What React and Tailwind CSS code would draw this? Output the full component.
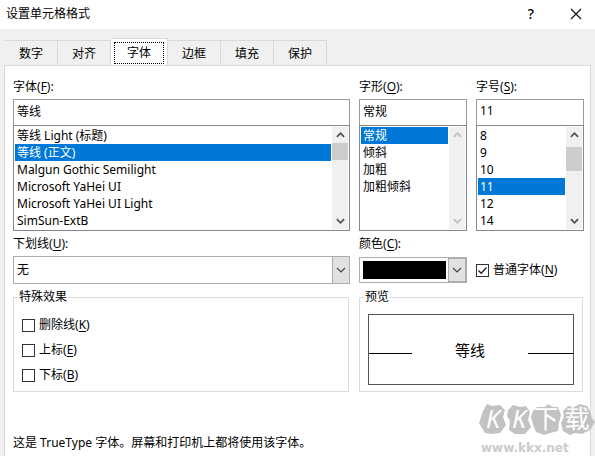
import React, { useState } from 'react';
import clsx from 'clsx';

const TABS = ['数字', '对齐', '字体', '边框', '填充', '保护'];

const FONTS = [
  '等线 Light (标题)',
  '等线 (正文)',
  'Malgun Gothic Semilight',
  'Microsoft YaHei UI',
  'Microsoft YaHei UI Light',
  'SimSun-ExtB',
];

const STYLES = ['常规', '倾斜', '加粗', '加粗倾斜'];

const SIZES = ['8', '9', '10', '11', '12', '14'];

const EFFECTS = [
  { id: 'strike', text: '删除线', hotkey: 'K' },
  { id: 'super', text: '上标', hotkey: 'E' },
  { id: 'sub', text: '下标', hotkey: 'B' },
];

const Hotkey = ({ text, hotkey, colon }) => (
  <>
    {text}(<span className="underline underline-offset-2">{hotkey}</span>){colon && ':'}
  </>
);

const Chevron = ({ className, up, thick }) => (
  <svg viewBox="0 0 10 6" className={className} fill="none" stroke="currentColor" strokeWidth={thick ? 2 : 1.2}>
    <path d={up ? 'M1 5 L5 1 L9 5' : 'M1 1 L5 5 L9 1'} />
  </svg>
);

const ScrollBar = ({ disabled, thumb }) => (
  <div className={clsx('flex w-4 shrink-0 flex-col bg-[#f0f0f0]', disabled ? 'text-[#bfbfbf]' : 'text-[#505050]')}>
    <button type="button" aria-label="向上滚动" disabled={disabled} className="flex h-4 items-center justify-center">
      <Chevron up thick className="h-[6px] w-[9px] overflow-visible" />
    </button>
    <div className="flex-1">{thumb && <div className={clsx('bg-[#cdcdcd]', thumb)} />}</div>
    <button type="button" aria-label="向下滚动" disabled={disabled} className="flex h-4 items-center justify-center">
      <Chevron thick className="h-[6px] w-[9px] overflow-visible" />
    </button>
  </div>
);

const FontField = ({ id, text, hotkey, options, value, onChange, disabled, thumb }) => (
  <div className="min-w-0">
    <label htmlFor={id} className="block h-5 leading-4">
      <Hotkey text={text} hotkey={hotkey} colon />
    </label>
    <input
      id={id}
      value={value.replace(/ \(.*\)/, '')}
      onChange={(e) => onChange(e.target.value)}
      className="block h-[26px] w-full border border-b-0 border-[#9a9a9a] bg-white px-[3px] pb-1 outline-none"
    />
    <div className="flex h-[106px] border border-[#828790] bg-white p-px">
      <ul role="listbox" aria-label={text} className="min-w-0 flex-1">
        {options.map((option) => (
          <li
            key={option}
            role="option"
            aria-selected={option === value}
            onClick={() => onChange(option)}
            className={clsx(
              'mr-px h-[17px] cursor-default truncate px-0.5 leading-[17px]',
              option === value && 'bg-[#0078d7] text-white'
            )}
          >
            {option}
          </li>
        ))}
      </ul>
      <ScrollBar disabled={disabled} thumb={thumb} />
    </div>
  </div>
);

const CheckBox = ({ id, text, hotkey, defaultChecked }) => (
  <div className="flex items-center gap-1">
    <span className="relative flex">
      <input
        id={id}
        type="checkbox"
        defaultChecked={defaultChecked}
        className="peer size-[13px] appearance-none border border-[#333] bg-white"
      />
      <svg
        viewBox="0 0 13 13"
        className="pointer-events-none absolute inset-0 hidden size-[13px] peer-checked:block"
        fill="none"
        stroke="#222"
        strokeWidth="1.3"
      >
        <path d="M2.5 6.5 L5.2 9.3 L10.5 3.5" />
      </svg>
    </span>
    <label htmlFor={id} className="leading-4">
      <Hotkey text={text} hotkey={hotkey} />
    </label>
  </div>
);

const DropArrow = () => (
  <span className="pointer-events-none absolute inset-y-0 right-0 flex w-[18px] items-center justify-center border border-[#adadad] bg-[#e1e1e1] text-[#444]">
    <Chevron className="h-[6px] w-[10px]" />
  </span>
);

const Watermark = () => (
  <div className="pointer-events-none absolute right-0 bottom-0 w-[116px]">
    <svg viewBox="0 -3 116 46" className="block w-full overflow-visible">
      <g fill="#c2c2c2">
        <path d="M4 8 L8 1 L13 3 L21 2 L26 7 L24 14 L27 22 L21 30 L13 31 L6 30 L0 20 Z" />
        <path d="M29 7 L34 2 L41 4 L47 3 L51 9 L49 17 L52 24 L46 31 L36 31 L30 27 L31 18 L28 13 Z" />
        <path d="M54 8 L58 4 L66 4 L69 1 L74 4 L79 4 L82 12 L80 20 L79 28 L71 30 L65 32 L57 29 L54 21 L52 14 Z" />
        <path d="M84 8 L89 3 L95 4 L101 1 L108 3 L111 8 L113 15 L116 19 L111 27 L103 31 L96 30 L91 32 L84 28 L82 20 L85 14 Z" />
      </g>
      <g
        fill="#fff"
        className="font-['Noto_Sans','Noto_Sans_CJK_SC',sans-serif]"
        fontSize="25"
        textAnchor="middle"
      >
        <text x="14" y="25" fontStyle="italic">K</text>
        <text x="40" y="25" fontStyle="italic">K</text>
        <text x="67" y="25">下</text>
        <text x="98" y="25">载</text>
      </g>
    </svg>
    <p className="-mt-1.5 pl-0.5 font-['DejaVu_Sans',sans-serif] text-xs leading-4 font-bold text-[#cbcbcb]">
      www.kkx.net
    </p>
  </div>
);

const App = () => {
  const [tab, setTab] = useState('字体');
  const [font, setFont] = useState('等线 (正文)');
  const [style, setStyle] = useState('常规');
  const [size, setSize] = useState('11');

  return (
    <div className="relative flex min-h-screen flex-col bg-[#f0f0f0] font-['Noto_Sans','Noto_Sans_CJK_SC',sans-serif] text-xs text-black">
      {/* Title bar */}
      <header className="flex h-[29px] items-center justify-between bg-white pr-3 pb-0.5 pl-1.5">
        <h1>设置单元格格式</h1>
        <div className="flex items-center gap-8">
          <button type="button" aria-label="帮助" className="w-3 text-sm leading-4 font-medium">
            ?
          </button>
          <button type="button" aria-label="关闭" className="p-px">
            <svg viewBox="0 0 12 12" className="size-3" stroke="#111" strokeWidth="1.2">
              <path d="M1 1 L11 11 M11 1 L1 11" />
            </svg>
          </button>
        </div>
      </header>

      {/* Tabs */}
      <div role="tablist" className="flex h-9 items-end pl-[5px]">
        {TABS.map((name) => (
          <button
            key={name}
            type="button"
            role="tab"
            aria-selected={name === tab}
            onClick={() => setTab(name)}
            className={clsx(
              'border-t border-r border-[#d9d9d9]',
              name === tab
                ? '-mb-px h-7 w-[57px] bg-white px-[3px] pt-[3px] pb-0.5'
                : 'h-[25px] w-[53px] pt-0.5'
            )}
          >
            <span
              className={clsx(
                'flex h-full items-center justify-center',
                name === tab && 'border border-dotted border-black'
              )}
            >
              {name}
            </span>
          </button>
        ))}
      </div>

      {/* Font page */}
      <main className="mx-1 flex-1 border border-b-0 border-[#d9d9d9] bg-white pt-[13px] pr-1.5 pl-2">
        <div className="grid grid-cols-[minmax(0,1fr)_108px_108px] gap-x-[9px]">
          <FontField id="font" text="字体" hotkey="F" options={FONTS} value={font} onChange={setFont} thumb="h-[17px]" />
          <FontField id="style" text="字形" hotkey="O" options={STYLES} value={style} onChange={setStyle} disabled />
          <FontField id="size" text="字号" hotkey="S" options={SIZES} value={size} onChange={setSize} thumb="mt-1 h-6" />

          <div className="pt-[5px]">
            <label htmlFor="underline" className="block h-5 leading-4">
              <Hotkey text="下划线" hotkey="U" colon />
            </label>
            <div className="relative h-7">
              <select
                id="underline"
                className="h-full w-full appearance-none border border-[#adadad] bg-white px-[3px] outline-none"
              >
                <option>无</option>
                <option>单下划线</option>
                <option>双下划线</option>
              </select>
              <DropArrow />
            </div>
          </div>
          <div className="pt-[5px]">
            <label htmlFor="color" className="block h-[21px] leading-4">
              <Hotkey text="颜色" hotkey="C" colon />
            </label>
            <button
              id="color"
              type="button"
              className="relative block h-[26px] w-full border border-[#adadad] bg-white py-[3px] pr-5 pl-[3px]"
            >
              <span className="block h-full bg-black" />
              <DropArrow />
            </button>
          </div>
          <div className="flex items-end pb-1.5">
            <CheckBox id="normal" text="普通字体" hotkey="N" defaultChecked />
          </div>
        </div>

        <div className="mt-1 grid grid-cols-[minmax(0,1fr)_225px] gap-x-[9px]">
          <fieldset className="mr-px border border-[#dcdcdc] px-2 pb-2">
            <legend className="-ml-1 px-px leading-[18px]">特殊效果</legend>
            <div className="flex flex-col gap-[9px] pt-[11px]">
              {EFFECTS.map((effect) => (
                <CheckBox key={effect.id} {...effect} />
              ))}
            </div>
          </fieldset>
          <fieldset className="mr-px border border-[#dcdcdc] px-2 pb-1.5">
            <legend className="-ml-1 px-px leading-[18px]">预览</legend>
            <div className="mt-2 flex h-[71px] items-center justify-between border border-[#555]">
              <span className="mt-2 h-px w-[43px] bg-black" />
              <span className="text-[15px]">等线</span>
              <span className="mt-2 h-px w-[45px] bg-black" />
            </div>
          </fieldset>
        </div>

        <p className="mt-[42px] leading-[18px]">这是 TrueType 字体。屏幕和打印机上都将使用该字体。</p>
      </main>

      <Watermark />
    </div>
  );
};

export default App;
